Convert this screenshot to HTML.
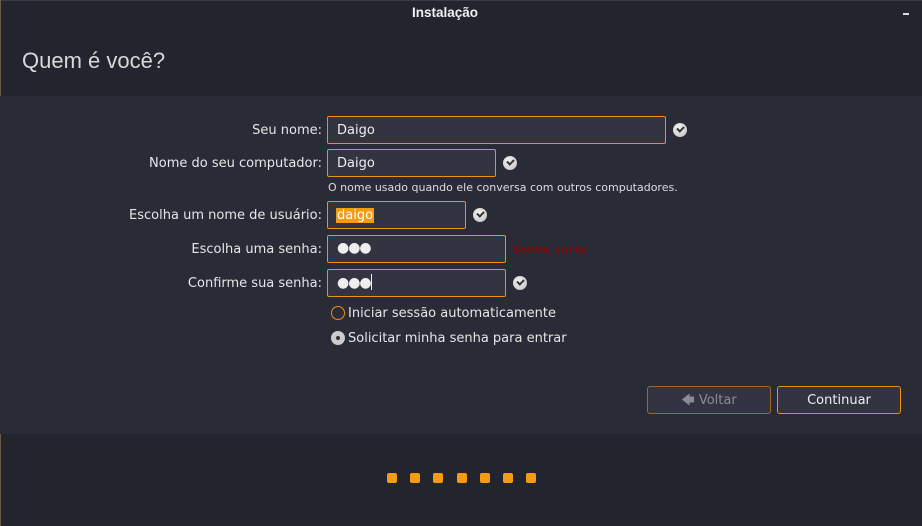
<!DOCTYPE html>
<html><head><meta charset="utf-8"><style>
*{margin:0;padding:0;box-sizing:border-box}
body{width:922px;height:526px;background:#22252e;font-family:"DejaVu Sans","Liberation Sans",sans-serif;color:#e6e6e6;position:relative;overflow:hidden}
.a{position:absolute}
.mid{left:0;top:96px;width:922px;height:338px;background:#292b37}
.lbl{font-size:13px;text-align:right;right:600px;width:300px}
.in{border:1px solid #f0900c;background:#323541;border-radius:2px;height:28px;font-size:13px;padding:6px 9px 0;color:#eee}
.chk{width:14px;height:14px;border-radius:50%;background:radial-gradient(circle at 40% 35%,#f4f4f4,#bcbcbc);}
.chk::after{content:"";position:absolute;left:4px;top:3px;width:5px;height:3px;border-left:2px solid #333;border-bottom:2px solid #333;transform:rotate(-45deg)}
.dot{width:10px;height:10px;background:#f39c12;border-radius:2px;top:473px}
.btn{border:1px solid #f0900c;border-radius:3px;background:#323541;height:28px;width:124px;font-size:13px;text-align:center;line-height:27px}
</style></head><body>
<div class="a" style="left:0;top:0;width:922px;height:1px;background:#3a3d48"></div>
<div class="a" style="left:0;top:0;width:1px;height:526px;background:#6b5a45"></div>
<div class="a" style="left:-16px;top:5px;width:922px;text-align:center;font-size:13.5px;font-weight:bold;color:#f0f0f0;font-family:'Liberation Sans',sans-serif">Instalação</div>
<div class="a" style="left:903px;top:13px;width:6px;height:2px;background:#ddd"></div>
<div class="a" style="left:22px;top:48px;font-size:22px;color:#d8d8d8;font-family:'Liberation Sans',sans-serif">Quem é você?</div>
<div class="a mid"></div>

<div class="a lbl" style="top:123px">Seu nome:</div>
<div class="a in" style="left:327px;top:116px;width:339px">Daigo</div>
<div class="a chk" style="left:673px;top:123px"></div>

<div class="a lbl" style="top:156px">Nome do seu computador:</div>
<div class="a in" style="left:327px;top:149px;width:169px">Daigo</div>
<div class="a chk" style="left:503px;top:156px"></div>
<div class="a" style="left:328px;top:181px;font-size:11px;color:#ddd">O nome usado quando ele conversa com outros computadores.</div>

<div class="a lbl" style="top:208px">Escolha um nome de usuário:</div>
<div class="a in" style="left:327px;top:201px;width:139px;padding-left:8px"><span style="background:#f39c12;color:#fff;padding:0 1px">daigo</span></div>
<div class="a chk" style="left:473px;top:208px"></div>

<div class="a lbl" style="top:242px">Escolha uma senha:</div>
<div class="a in" style="left:327px;top:235px;width:179px;letter-spacing:-1px;font-size:14px;padding-top:4px">●●●</div>
<div class="a" style="left:512px;top:243px;font-size:11px;font-weight:bold;color:#7a0e0e">Senha curta</div>

<div class="a lbl" style="top:276px">Confirme sua senha:</div>
<div class="a in" style="left:327px;top:269px;width:179px;letter-spacing:-1px;font-size:14px;padding-top:4px">●●●<span style="display:inline-block;width:1px;height:16px;background:#eee;vertical-align:-3px"></span></div>
<div class="a chk" style="left:513px;top:276px"></div>

<div class="a" style="left:331px;top:306px;width:14px;height:14px;border:1px solid #f0900c;border-radius:50%"></div>
<div class="a" style="left:348px;top:306px;font-size:13px">Iniciar sessão automaticamente</div>
<div class="a" style="left:331px;top:331px;width:14px;height:14px;border-radius:50%;background:#ccc"><div class="a" style="left:5px;top:5px;width:4px;height:4px;border-radius:50%;background:#333"></div></div>
<div class="a" style="left:348px;top:331px;font-size:13px">Solicitar minha senha para entrar</div>

<div class="a btn" style="left:647px;top:386px;border-color:#a06a20;color:#8a8c95">🡄 Voltar</div>
<div class="a btn" style="left:777px;top:386px;color:#eee">Continuar</div>

<div class="a dot" style="left:387px"></div><div class="a dot" style="left:410px"></div><div class="a dot" style="left:433px"></div><div class="a dot" style="left:457px"></div><div class="a dot" style="left:480px"></div><div class="a dot" style="left:503px"></div><div class="a dot" style="left:526px"></div>
</body></html>
